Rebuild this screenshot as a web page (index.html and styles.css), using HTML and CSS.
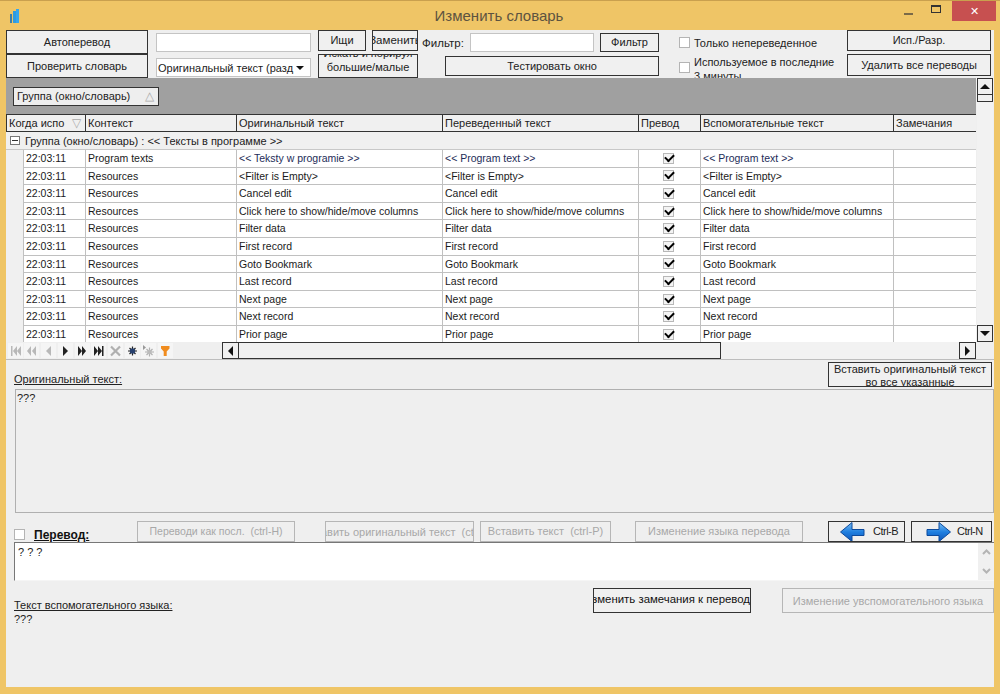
FILE: index.html
```html
<!DOCTYPE html>
<html lang="ru">
<head>
  <meta charset="UTF-8" />
  <title>Изменить словарь</title>
  <link rel="stylesheet" href="styles.css">
</head>
<body>
  <div class="window">
    <div class="titlebar">
      <svg class="app-icon" width="10" height="14" viewBox="0 0 10 14">
        <rect x="0" y="5" width="2" height="9" fill="#3d7fa8"/>
        <rect x="3" y="2" width="3" height="12" fill="#2f9be0"/>
        <rect x="6" y="0" width="3" height="14" fill="#35a6ee"/>
      </svg>
      <div class="title">Изменить словарь</div>
      <div class="win-btns">
        <div class="win-btn"><span class="win-min"></span></div>
        <div class="win-btn"><span class="win-max"></span></div>
        <div class="win-btn win-close">✕</div>
      </div>
    </div>

    <div class="client">
      <div class="toolbar">
        <div class="tool-col col-auto">
          <button class="btn btn-big">Автоперевод</button>
          <button class="btn btn-big">Проверить словарь</button>
        </div>
        <div class="tool-col col-search">
          <div class="field"></div>
          <div class="select">Оригинальный текст (разд<span class="select-arrow"></span></div>
        </div>
        <div class="tool-col col-find">
          <div class="find-top">
            <button class="btn btn-find">Ищи</button>
            <button class="btn btn-replace">Заменить</button>
          </div>
          <button class="btn btn-case"><span>Искать и порируя<br>большие/малые</span></button>
        </div>
        <div class="tool-col col-filter">
          <div class="filter-top">
            <span class="filter-label">Фильтр:</span>
            <div class="field filter-field"></div>
            <button class="btn btn-filter">Фильтр</button>
          </div>
          <button class="btn btn-test">Тестировать окно</button>
        </div>
        <div class="tool-col col-checks">
          <label class="check-line"><span class="box"></span>Только непереведенное</label>
          <label class="check-line check-clip"><span class="box"></span><span>Используемое в последние<br>3 минуты</span></label>
        </div>
        <div class="tool-col col-right">
          <button class="btn btn-right">Исп./Разр.</button>
          <button class="btn btn-right">Удалить все переводы</button>
        </div>
      </div>

      <div class="grid-wrap">
        <div class="grid-main">
          <div class="group-band">
            <div class="group-chip">Группа (окно/словарь)<span class="tri-up">△</span></div>
          </div>
          <div class="row head">
            <div class="hcell">Когда испо<span class="tri-down">▽</span></div>
            <div class="hcell">Контекст</div>
            <div class="hcell">Оригинальный текст</div>
            <div class="hcell">Переведенный текст</div>
            <div class="hcell">Превод</div>
            <div class="hcell">Вспомогательные текст</div>
            <div class="hcell">Замечания</div>
          </div>
          <div class="group-row"><span class="minus"></span>Группа (окно/словарь) : &lt;&lt; Тексты в программе &gt;&gt;</div>
          <div class="rows">
            <div class="row data"><div class="cell">22:03:11</div><div class="cell">Program texts</div><div class="cell blue">&lt;&lt; Teksty w programie &gt;&gt;</div><div class="cell blue">&lt;&lt; Program text &gt;&gt;</div><div class="cell mid"><span class="tick"></span></div><div class="cell blue">&lt;&lt; Program text &gt;&gt;</div><div class="cell"></div></div>
            <div class="row data"><div class="cell">22:03:11</div><div class="cell">Resources</div><div class="cell">&lt;Filter is Empty&gt;</div><div class="cell">&lt;Filter is Empty&gt;</div><div class="cell mid"><span class="tick"></span></div><div class="cell">&lt;Filter is Empty&gt;</div><div class="cell"></div></div>
            <div class="row data"><div class="cell">22:03:11</div><div class="cell">Resources</div><div class="cell">Cancel edit</div><div class="cell">Cancel edit</div><div class="cell mid"><span class="tick"></span></div><div class="cell">Cancel edit</div><div class="cell"></div></div>
            <div class="row data"><div class="cell">22:03:11</div><div class="cell">Resources</div><div class="cell">Click here to show/hide/move columns</div><div class="cell">Click here to show/hide/move columns</div><div class="cell mid"><span class="tick"></span></div><div class="cell">Click here to show/hide/move columns</div><div class="cell"></div></div>
            <div class="row data"><div class="cell">22:03:11</div><div class="cell">Resources</div><div class="cell">Filter data</div><div class="cell">Filter data</div><div class="cell mid"><span class="tick"></span></div><div class="cell">Filter data</div><div class="cell"></div></div>
            <div class="row data"><div class="cell">22:03:11</div><div class="cell">Resources</div><div class="cell">First record</div><div class="cell">First record</div><div class="cell mid"><span class="tick"></span></div><div class="cell">First record</div><div class="cell"></div></div>
            <div class="row data"><div class="cell">22:03:11</div><div class="cell">Resources</div><div class="cell">Goto Bookmark</div><div class="cell">Goto Bookmark</div><div class="cell mid"><span class="tick"></span></div><div class="cell">Goto Bookmark</div><div class="cell"></div></div>
            <div class="row data"><div class="cell">22:03:11</div><div class="cell">Resources</div><div class="cell">Last record</div><div class="cell">Last record</div><div class="cell mid"><span class="tick"></span></div><div class="cell">Last record</div><div class="cell"></div></div>
            <div class="row data"><div class="cell">22:03:11</div><div class="cell">Resources</div><div class="cell">Next page</div><div class="cell">Next page</div><div class="cell mid"><span class="tick"></span></div><div class="cell">Next page</div><div class="cell"></div></div>
            <div class="row data"><div class="cell">22:03:11</div><div class="cell">Resources</div><div class="cell">Next record</div><div class="cell">Next record</div><div class="cell mid"><span class="tick"></span></div><div class="cell">Next record</div><div class="cell"></div></div>
            <div class="row data"><div class="cell">22:03:11</div><div class="cell">Resources</div><div class="cell">Prior page</div><div class="cell">Prior page</div><div class="cell mid"><span class="tick"></span></div><div class="cell">Prior page</div><div class="cell"></div></div>
          </div>
        </div>
        <div class="vscroll">
          <div class="sb-btn"><span class="arr-up"></span></div>
          <div class="sb-thumb"></div>
          <div class="sb-space"></div>
          <div class="sb-btn"><span class="arr-down"></span></div>
        </div>
      </div>

      <div class="nav-row">
        <div class="navigator">
          <svg class="nav-svg" width="166" height="18" viewBox="0 0 166 18">
            <g fill="#f5f5f5">
              <rect x="0" y="1" width="15" height="15"/><rect x="16" y="1" width="15" height="15"/>
              <rect x="33" y="1" width="15" height="15"/><rect x="50" y="1" width="15" height="15"/>
              <rect x="67" y="1" width="15" height="15"/><rect x="83" y="1" width="15" height="15"/>
              <rect x="100" y="1" width="15" height="15"/><rect x="117" y="1" width="15" height="15"/>
              <rect x="133" y="1" width="15" height="15"/><rect x="150" y="1" width="15" height="15"/>
            </g>
            <g fill="#b8b8b8">
              <rect x="3" y="4" width="1.500" height="10"/><path d="M9 4v10l-4-5zM13 4v10l-4-5z"/>
              <path d="M23 4v10l-4-5zM28 4v10l-4-5z"/>
              <path d="M43 4v10l-5-5z"/>
            </g>
            <g fill="#222">
              <path d="M55 4v10l5-5z"/>
              <path d="M70 4v10l4-5zM74 4v10l4-5z"/>
              <path d="M86 4v10l4-5zM90 4v10l4-5z"/><rect x="94" y="4" width="1.500" height="10"/>
            </g>
            <path d="M103 4.500l9 9M112 4.500l-9 9" stroke="#b0b0b0" stroke-width="2.200"/>
            <g stroke="#222" stroke-width="1.200"><path d="M120 9h9M124.500 4.500v9M121.500 6l6 6M127.500 6l-6 6"/></g>
            <circle cx="124.500" cy="9" r="2.700" fill="#27406e"/>
            <path d="M135 3v5l3-2.500z" fill="#999"/>
            <g stroke="#b0b0b0" stroke-width="1.200"><path d="M137 10h9M141.500 5.500v9M138.500 7l6 6M144.500 7l-6 6"/></g>
            <circle cx="141.500" cy="10" r="2.200" fill="#bbb"/>
            <path d="M153 4h8.500v2.500l-2.800 3v4.500h-3v-4.500l-2.700-3z" fill="#f08c1e"/>
          </svg>
        </div>
        <div class="hscroll">
          <div class="hs-btn"><span class="arr-left"></span></div>
          <div class="hs-thumb"></div>
          <div class="hs-space"></div>
          <div class="hs-btn"><span class="arr-right"></span></div>
        </div>
      </div>

      <div class="orig-head">
        <span class="u-label">Оригинальный текст:</span>
        <button class="btn btn-insert">Вставить оригинальный текст<br>во все указанные</button>
      </div>
      <div class="memo-orig">???</div>

      <div class="trans-head">
        <span class="box trans-box"></span>
        <span class="trans-label">Перевод:</span>
        <button class="btn-off w-last">Переводи как посл.&nbsp; (ctrl-H)</button>
        <button class="btn-off w-orig"><span class="off-clip">Вставить оригинальный текст&nbsp; (ctrl-O)</span></button>
        <button class="btn-off w-paste">Вставить текст&nbsp; (ctrl-P)</button>
        <button class="btn-off w-lang">Изменение языка перевода</button>
        <button class="btn btn-arrow">
          <svg width="25" height="20" viewBox="0 0 25 20">
            <defs>
              <linearGradient id="arrow-fill" x1="0" y1="0" x2="0" y2="1">
                <stop offset="0" stop-color="#7cc0f5"/>
                <stop offset="0.5" stop-color="#1f7fe0"/>
                <stop offset="1" stop-color="#0e55b8"/>
              </linearGradient>
            </defs>
            <path d="M0.500 10L12 0.500v7h12v6H12v6z" fill="url(#arrow-fill)" stroke="#0d4a9c"/>
          </svg>Ctrl-B
        </button>
        <button class="btn btn-arrow btn-next">
          <svg width="25" height="20" viewBox="0 0 25 20">
            <path d="M24.500 10L13 0.500v7H1v6h12v6z" fill="url(#arrow-fill)" stroke="#0d4a9c"/>
          </svg>Ctrl-N
        </button>
      </div>
      <div class="memo-trans">
        <div class="memo-text">? ? ?</div>
        <div class="memo-sb">
          <svg width="9" height="6" viewBox="0 0 9 6"><path d="M1 5l3.500-3.500L8 5" fill="none" stroke="#b4b4b4" stroke-width="2"/></svg>
          <svg width="9" height="6" viewBox="0 0 9 6"><path d="M1 1l3.500 3.500L8 1" fill="none" stroke="#b4b4b4" stroke-width="2"/></svg>
        </div>
      </div>

      <div class="aux">
        <div class="aux-text">
          <span class="u-label">Текст вспомогательного языка:</span>
          <div class="aux-value">???</div>
        </div>
        <button class="btn btn-notes">Изменить замечания к перевод</button>
        <button class="btn-off btn-auxlang">Изменение увспомогательного языка</button>
      </div>
    </div>
  </div>
</body>
</html>
```

FILE: styles.css
```css
* { box-sizing: border-box; }
html, body { margin: 0; height: 100%; }
body {
  background: #efc566;
  font-family: "Liberation Sans", Arial, sans-serif;
  font-size: 11px;
  color: #222;
  overflow: hidden;
}
button { font-family: inherit; font-size: inherit; color: inherit; margin: 0; padding: 0; }

.window { display: flex; flex-direction: column; height: 694px; padding: 0 6px 7px; border-top: 1px solid #c9a04e; }
.titlebar { display: flex; align-items: flex-start; height: 29px; flex: none; }
.app-icon { margin: 8px 0 0 4px; }
.title { flex: 1; text-align: center; font-size: 15px; line-height: 30px; color: #5d5340; padding-left: 84px; }
.win-btns { display: flex; margin-right: -2px; }
.win-btn { width: 44px; height: 20px; display: flex; align-items: center; justify-content: center; color: #333; }
.win-btn:first-child { width: 28px; }
.win-btn:nth-child(2) { width: 28px; margin-right: 2px; }
.win-min { width: 9px; height: 2px; background: #7a6a48; margin-top: 5px; }
.win-max { width: 10px; height: 8px; border: 1px solid #333; border-top-width: 2px; margin-bottom: 4px; }
.win-close { background: #c75050; color: #fff; font-size: 11px; }

.client { flex: 1; display: flex; flex-direction: column; background: #efefef; min-height: 0; overflow: hidden; }

.btn { display: block; background: #f0f0f0; border: 1px solid #333; text-align: center; line-height: 13px; overflow: hidden; }

.toolbar { display: flex; height: 48px; flex: none; }
.tool-col { display: flex; flex-direction: column; }
.col-auto { width: 142px; }
.btn-big { height: 24px; }
.col-search { width: 155px; margin: 3px 0 0 8px; gap: 6px; }
.field { height: 19px; background: #fff; border: 1px solid #c4c4c4; }
.select { position: relative; height: 19px; background: #fff; border: 1px solid #c4c4c4; line-height: 18px; padding-left: 1px; white-space: nowrap; overflow: hidden; }
.select-arrow { position: absolute; right: 6px; top: 7px; border: 4px solid transparent; border-top: 4px solid #111; }
.col-find { width: 100px; margin-left: 7px; gap: 3px; }
.find-top { display: flex; justify-content: space-between; }
.btn-find { width: 48px; height: 21px; }
.btn-replace { display: flex; align-items: center; justify-content: center; width: 46px; height: 21px; white-space: nowrap; font-size: 11.5px; }
.btn-case { display: flex; flex-direction: column; justify-content: flex-end; height: 24px; line-height: 14px; padding-bottom: 3px; white-space: nowrap; }
.col-filter { width: 241px; margin-left: 4px; }
.filter-top { display: flex; align-items: center; height: 19px; margin-top: 3px; }
.filter-label { width: 48px; font-size: 11.5px; }
.filter-field { width: 124px; }
.btn-filter { width: 59px; height: 19px; margin-left: 6px; }
.btn-test { width: 214px; height: 20px; margin: 4px 0 0 23px; }
.col-checks { width: 168px; margin-left: 16px; }
.check-line { display: flex; align-items: center; gap: 4px; height: 14px; margin-top: 6px; white-space: nowrap; }
.check-clip { align-items: flex-start; height: 24px; margin-top: 6px; line-height: 14px; overflow: hidden; }
.check-clip .box { margin-top: 7px; }
.box { display: block; width: 11px; height: 11px; background: #fff; border: 1px solid #b4b4b4; flex: none; }
.col-right { width: 144px; gap: 3px; }
.btn-right { height: 21px; }
.btn-right + .btn-right { height: 22px; }

.grid-wrap { display: flex; height: 264px; flex: none; }
.grid-main { width: 970px; background: #fff; overflow: hidden; }
.group-band { height: 36px; background: #a0a0a0; padding: 9px 0 0 7px; }
.group-chip { display: flex; justify-content: space-between; width: 146px; height: 19px; background: #eee; border: 1px solid #333; line-height: 16px; padding: 0 4px 0 3px; }
.tri-up, .tri-down { color: #aaa; font-size: 12px; }
.row { display: grid; grid-template-columns: 79px 151px 206px 196px 62px 193px 83px; }
.head { height: 18px; background: #f0f0f0; border-top: 1px solid #333; border-bottom: 1px solid #333; }
.hcell { border-left: 1px solid #333; padding-left: 2px; line-height: 16px; display: flex; justify-content: space-between; padding-right: 4px; white-space: nowrap; }
.group-row { display: flex; align-items: center; height: 18px; background: #f0f0f0; border-bottom: 1px solid #c8c8c8; padding-left: 4px; white-space: nowrap; }
.minus { position: relative; width: 10px; height: 9px; border: 1px solid #777; background: #fff; margin-right: 5px; }
.minus::after { content: ""; position: absolute; left: 1px; right: 1px; top: 3px; height: 1px; background: #333; }
.rows { padding-left: 17px; background: #f0f0f0; }
.rows .row { grid-template-columns: 62px 151px 206px 196px 62px 193px 83px; }
.data { height: 17.6px; background: #fff; border-bottom: 1px solid #c0c0c0; }
.cell { border-left: 1px solid #c0c0c0; padding-left: 2px; font-size: 10.5px; line-height: 17px; white-space: nowrap; overflow: hidden; color: #1a1a1a; }
.blue { color: #1d2c58; }
.mid { display: flex; align-items: center; justify-content: center; padding: 0 3px 0 0; }
.tick { position: relative; display: block; width: 11px; height: 11px; background: #f4f4f4; border: 1px solid #b8b8b8; }
.tick::after { content: ""; position: absolute; left: 1px; top: 0; width: 7px; height: 4px; border-left: 2px solid #000; border-bottom: 2px solid #000; transform: rotate(-45deg); }

.vscroll { display: flex; flex-direction: column; width: 16px; margin-left: 1px; background: #f2f2f2; }
.sb-btn { display: flex; align-items: center; justify-content: center; height: 17px; background: #f0f0f0; border: 1px solid #333; flex: none; }
.sb-thumb { height: 7px; background: #f0f0f0; border: 1px solid #333; border-top: 0; flex: none; }
.sb-space { flex: 1; }
.arr-up { border: 5px solid transparent; border-bottom: 5px solid #111; border-top: 0; }
.arr-down { border: 5px solid transparent; border-top: 5px solid #111; border-bottom: 0; }
.arr-left { border: 5px solid transparent; border-right: 5px solid #111; border-left: 0; }
.arr-right { border: 5px solid transparent; border-left: 5px solid #111; border-right: 0; }

.nav-row { display: flex; height: 18px; flex: none; border-bottom: 1px solid #bdbdbd; }
.navigator { width: 216px; padding: 0 0 0 2px; }
.nav-svg { display: block; }
.hscroll { display: flex; width: 754px; background: #f2f2f2; }
.hs-btn { display: flex; align-items: center; justify-content: center; width: 17px; height: 17px; background: #f0f0f0; border: 1px solid #333; flex: none; }
.hs-thumb { width: 482px; background: #f0f0f0; border: 1px solid #333; border-left: 0; height: 17px; }
.hs-space { flex: 1; }

.orig-head { display: flex; justify-content: space-between; height: 29px; flex: none; padding: 2px 2px 0 8px; }
.u-label { display: inline-block; text-decoration: underline; margin-top: 11px; line-height: 13px; }
.btn-insert { width: 164px; height: 25px; line-height: 13px; white-space: nowrap; }
.memo-orig { height: 124px; flex: none; margin-left: 9px; background: #efefef; border: 1px solid #b0b0b0; padding: 2px 1px; line-height: 13px; }

.trans-head { display: flex; align-items: flex-start; height: 29px; flex: none; padding: 8px 0 0 8px; }
.trans-box { margin-top: 8px; }
.trans-label { width: 103px; margin: 8px 0 0 9px; font-size: 12px; font-weight: bold; text-decoration: underline; color: #111; line-height: 13px; }
.btn-off { display: block; height: 21px; background: #efefef; border: 1px solid #b6b6b6; color: #a8a8a8; line-height: 17px; white-space: nowrap; overflow: hidden; text-align: center; }
.w-last { width: 158px; font-size: 10.5px; }
.w-orig { width: 149px; margin-left: 30px; position: relative; }
.off-clip { position: absolute; left: 50%; top: 2px; transform: translateX(-50%); }
.w-paste { width: 131px; margin-left: 6px; }
.w-lang { width: 168px; margin-left: 24px; }
.w-orig, .w-paste, .w-lang { flex: none; }
.btn-arrow { display: flex; align-items: center; gap: 8px; width: 77px; height: 21px; margin-left: 25px; padding-left: 11px; background: #efefef; letter-spacing: -0.5px; overflow: hidden; flex: none; }
.btn-next { width: 81px; margin-left: 6px; padding-left: 14px; gap: 6px; }

.memo-trans { display: flex; height: 39px; flex: none; margin-left: 8px; background: #fff; border-top: 1px solid #777; border-left: 1px solid #777; border-bottom: 1px solid #f5f5f5; }
.memo-text { flex: 1; padding: 3px 3px; line-height: 13px; }
.memo-sb { display: flex; flex-direction: column; justify-content: space-between; align-items: center; width: 16px; padding: 6px 0; background: #f0f0f0; }

.aux { display: flex; align-items: flex-start; flex: 1; padding: 7px 0 0 8px; }
.aux-text { width: 579px; }
.aux-text .u-label { margin-top: 11px; }
.aux-value { margin-top: 1px; line-height: 13px; }
.btn-notes { display: flex; align-items: center; justify-content: flex-end; width: 158px; height: 25px; padding-bottom: 2px; font-size: 11.4px; color: #111; white-space: nowrap; }
.btn-auxlang { width: 212px; height: 25px; margin-left: 31px; line-height: 22px; }
```
